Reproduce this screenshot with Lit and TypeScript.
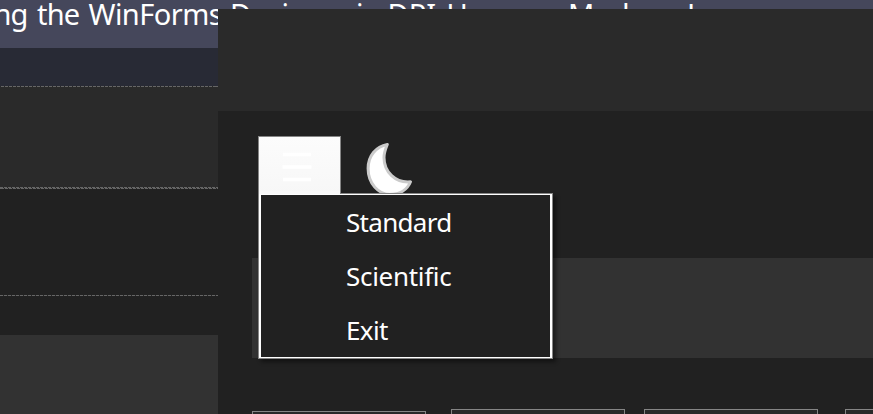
import { LitElement, html, css } from "lit";
import { customElement } from "lit/decorators.js";

@customElement("mode-menu")
class ModeMenu extends LitElement {
  static styles = css`
    :host { display: block; box-sizing: border-box; width: 295px; height: 166px; border: 1px solid #858585; background: #fff; padding: 1px 2px; box-shadow: 3px 3px 4px rgba(0, 0, 0, 0.45); }
    .list { box-sizing: border-box; height: 162px; background: #212121; padding-left: 85px; display: grid; grid-template-rows: repeat(3, 54px); align-items: center; }
    .item { font: 26px/36px "Noto Sans", sans-serif; color: #fff; white-space: nowrap; }
    .a { letter-spacing: -0.7px; }
    .b { letter-spacing: -0.3px; }
    .c { letter-spacing: -0.6px; }
  `;
  render() {
    return html`<div class="list">
      <div class="item a">Standard</div>
      <div class="item b">Scientific</div>
      <div class="item c">Exit</div>
    </div>`;
  }
}

@customElement("app-root")
export class AppRoot extends LitElement {
  static styles = css`
    :host { display: block; width: 873px; height: 414px; overflow: hidden; background: #45475b; }
    .screen { display: grid; grid-template-columns: 218px 655px; grid-template-rows: 9px 39px 366px; height: 414px; position: relative; }
    .title { grid-column: 1 / 3; grid-row: 1 / 3; background: #45475b; color: #fff; display: grid; grid-template-columns: 43.5px 51.5px 141.5px 126px 31.5px 59px 121.5px 119px 180px; margin-left: -6.5px; font: 29px/30px "Noto Sans", sans-serif; white-space: nowrap; height: 48px; }
    .title span { height: 30px; margin-top: -1px; }
    .n { letter-spacing: -0.8px; }
    .w { letter-spacing: -0.55px; }
    .left { grid-column: 1; grid-row: 3; display: flex; flex-direction: column; overflow: hidden; }
    .strip { height: 38px; background: #282a35; }
    .band { height: 100px; background: #2a2a2a; }
    .dash { height: 1px; background: repeating-linear-gradient(90deg, #666 0 3px, #292929 3px 4px); }
    .shift { background-position: 1px 0; }
    .first { background-position: -3px 0; }
    .gap { height: 106px; background: #212121; }
    .gap2 { height: 39px; background: #212121; }
    .panel { flex: 1; background: #323232; }
    .window { grid-column: 2; grid-row: 2 / 4; background: #212121; overflow: hidden; display: flex; flex-direction: column; z-index: 1; position: relative; }
    .caption { height: 102px; background: #2a2a2a; flex: none; }
    .tools { height: 147px; flex: none; display: flex; align-items: flex-start; box-sizing: border-box; padding: 25px 0 0 40px; }
    .burger { box-sizing: border-box; width: 83px; height: 58px; border: 1px solid #858585; border-bottom: 0; background: linear-gradient(#fcfcfc, #f7f7f7); }
    .moon { width: 60px; height: 58px; margin-left: 20px; }
    svg { display: block; }
    .display { margin-left: 34px; height: 100px; flex: none; background: #323232; }
    .keys { display: grid; grid-template-columns: 199px 193px 201px 174px; padding: 51px 0 0 34px; }
    .key { box-sizing: border-box; width: 174px; height: 60px; border: 1px solid #858585; background: #292929; }
    .low { margin-top: 2px; }
    mode-menu { position: absolute; left: 40px; top: 184px; }
    .join { position: absolute; left: 41px; top: 182px; width: 81px; height: 3px; background: #f9f9f9; }
  `;
  render() {
    return html`<div class="screen">
      <div class="title">
        <span class="n">ng</span><span class="n">the</span><span class="w">WinForms</span><span>Designer</span><span>in</span><span>DPI</span><span>Unaware</span><span>Mode.</span><span>Learn more</span>
      </div>
      <div class="left">
        <div class="strip"></div>
        <div class="dash first"></div>
        <div class="band"></div>
        <div class="dash"></div>
        <div class="dash shift"></div>
        <div class="gap"></div>
        <div class="dash"></div>
        <div class="gap2"></div>
        <div class="panel"></div>
      </div>
      <div class="window">
        <div class="caption"></div>
        <div class="tools">
          <div class="burger">
            <svg width="81" height="57"><path d="M24 17.5h28M23.5 30h29M24 42.5h28" stroke="#fff" stroke-width="3.4"/></svg>
          </div>
          <div class="moon">
            <svg width="60" height="58" viewBox="361 136 60 58"><path d="M387.3 144.5C376 146.5 368.1 156 368.1 168.5C368.1 183.5 378.5 194.5 390 194.5C400 194.5 407.5 189.5 410.5 181.8C395.5 183.3 384 172 384 157.5C384 152.5 385.7 148.5 387.3 144.5Z" fill="#fff" stroke="#cbcbcb" stroke-width="3" stroke-linejoin="round"/></svg>
          </div>
        </div>
        <div class="display"></div>
        <div class="keys">
          <div class="key low"></div><div class="key"></div><div class="key"></div><div class="key"></div>
        </div>
        <mode-menu></mode-menu>
        <div class="join"></div>
      </div>
    </div>`;
  }
}
